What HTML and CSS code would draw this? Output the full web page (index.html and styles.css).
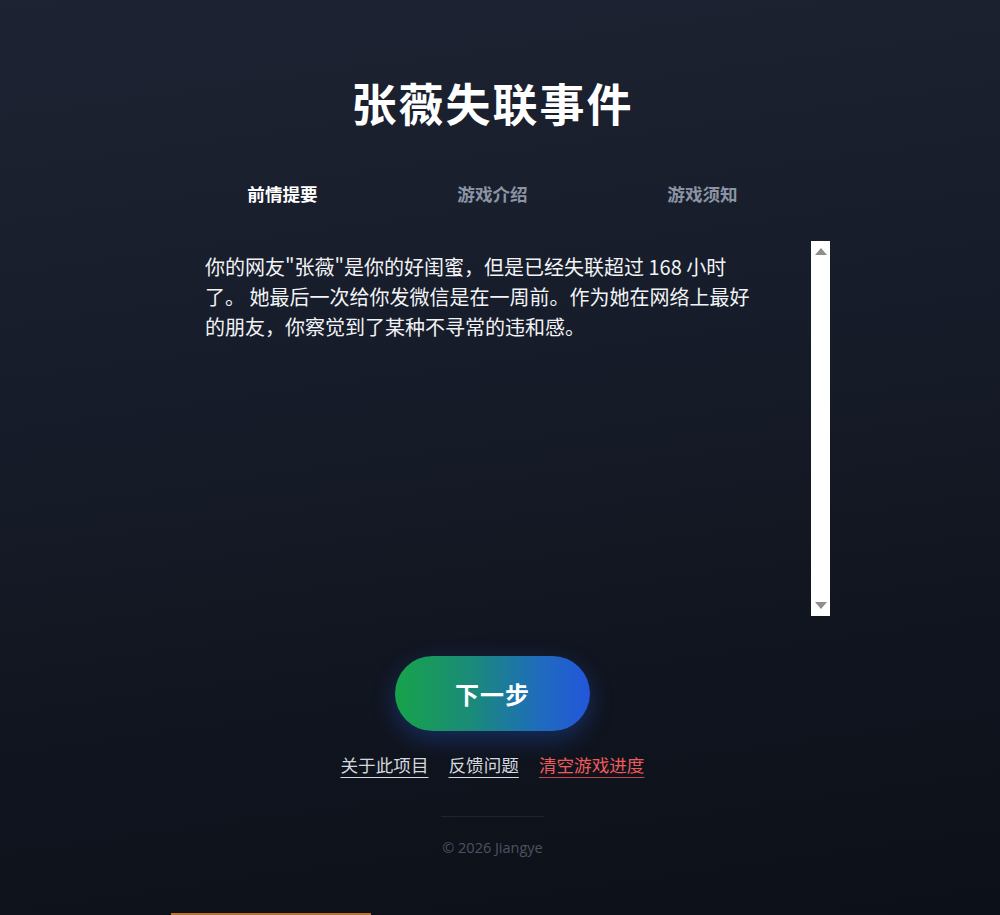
FILE: index.html
```html
<!DOCTYPE html>
<html lang="zh-CN">
<head>
<meta charset="utf-8">
<title>张薇失联事件</title>
<link rel="stylesheet" href="styles.css">
</head>
<body>
<main class="page">
  <h1 class="title">张薇失联事件</h1>
  <nav class="tabs">
    <div class="tab tab-active">前情提要</div>
    <div class="tab">游戏介绍</div>
    <div class="tab">游戏须知</div>
  </nav>
  <section class="story">
    <div class="story-text">你的网友"张薇"是你的好闺蜜，但是已经失联超过 168 小时了。 她最后一次给你发微信是在一周前。作为她在网络上最好的朋友，你察觉到了某种不寻常的违和感。</div>
    <div class="scrollbar">
      <span class="arrow arrow-up"></span>
      <span class="arrow arrow-down"></span>
    </div>
  </section>
  <div class="actions">
    <button class="next-btn">下一步</button>
  </div>
  <div class="links">
    <a class="link">关于此项目</a>
    <a class="link">反馈问题</a>
    <a class="link link-danger">清空游戏进度</a>
  </div>
  <div class="divider"></div>
  <footer class="footer">© 2026 Jiangye</footer>
</main>
<div class="toast-edge"></div>
</body>
</html>
```

FILE: styles.css
```css
html, body {
  margin: 0;
  height: 100%;
}

body {
  padding-right: 15px;
  min-height: 915px;
  overflow: hidden;
  background: linear-gradient(172deg, #1d2332 0%, #161c29 40%, #10141e 75%, #0c1018 100%);
  font-family: "Noto Sans CJK SC", "Noto Sans", sans-serif;
  color: #eef0f4;
}

.page {
  width: 675px;
  margin: 0 auto;
  padding-top: 76px;
  display: flex;
  flex-direction: column;
}

.title {
  margin: 0;
  text-align: center;
  font-size: 45px;
  line-height: 54px;
  font-weight: 700;
  letter-spacing: 2px;
  color: #ffffff;
}

.tabs {
  width: 630px;
  margin: 39px auto 0;
  display: grid;
  grid-template-columns: repeat(3, 1fr);
}

.tab {
  text-align: center;
  padding: 12px 0;
  font-size: 17.6px;
  line-height: 26px;
  font-weight: 700;
  color: #8a94a4;
}

.tab-active {
  color: #ffffff;
}

.story {
  margin-top: 22px;
  height: 375px;
  display: flex;
}

.story-text {
  flex: 1;
  padding: 11px 56px 12px 50px;
  font-size: 20px;
  line-height: 30px;
  color: #f1f3f6;
}

.scrollbar {
  width: 19px;
  background: #ffffff;
  display: flex;
  flex-direction: column;
  justify-content: space-between;
  align-items: center;
  padding: 7px 0;
}

.arrow {
  width: 0;
  height: 0;
  border-left: 6px solid transparent;
  border-right: 6px solid transparent;
}

.arrow-up {
  border-bottom: 7px solid #8e8e8e;
}

.arrow-down {
  border-top: 7px solid #8e8e8e;
}

.actions {
  margin-top: 40px;
  display: flex;
  justify-content: center;
}

.next-btn {
  width: 195px;
  height: 75px;
  border: none;
  border-radius: 38px;
  background: linear-gradient(90deg, #17a34a 0%, #1a8a7a 40%, #1f6bbf 75%, #2356da 100%);
  box-shadow: 0 8px 24px rgba(37, 99, 235, 0.32);
  color: #ffffff;
  font-family: "Noto Sans CJK SC", sans-serif;
  font-size: 24px;
  font-weight: 700;
  letter-spacing: 1px;
  padding: 0;
}

.links {
  margin-top: 21px;
  display: flex;
  justify-content: center;
  gap: 20px;
}

.link {
  font-size: 17.6px;
  line-height: 26px;
  color: #d4d8df;
  text-decoration: underline;
  text-underline-offset: 5px;
  text-decoration-thickness: 1px;
}

.link-danger {
  color: #ef5b5b;
  text-decoration-color: #c24848;
}

.divider {
  width: 103px;
  height: 1px;
  margin: 38px auto 0;
  background: #1e2431;
}

.footer {
  margin-top: 21px;
  text-align: center;
  font-family: "Open Sans", "Noto Sans", sans-serif;
  font-size: 14.5px;
  line-height: 20px;
  color: #4b5361;
}

.toast-edge {
  position: fixed;
  left: 171px;
  top: 913px;
  width: 200px;
  height: 2px;
  background: #b8742f;
}
```
